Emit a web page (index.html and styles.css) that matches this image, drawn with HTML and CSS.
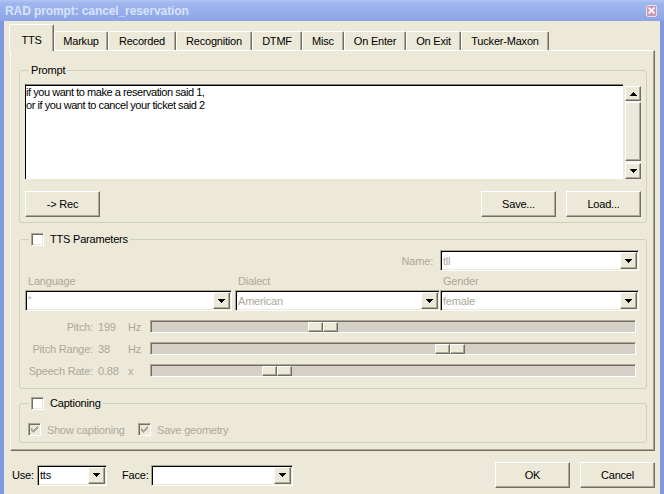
FILE: index.html
```html
<!DOCTYPE html>
<html lang="en">
<head>
<meta charset="utf-8">
<title>RAD prompt: cancel_reservation</title>
<link rel="stylesheet" href="styles.css">
</head>
<body>
<div class="window">
  <div class="titlebar">
    <span class="title">RAD prompt: cancel_reservation</span>
    <span class="close-btn"><svg width="7" height="7" viewBox="0 0 7 7"><path d="M0.6 0.6L6.4 6.4M6.4 0.6L0.6 6.4" stroke="#fff" stroke-width="1.7"/></svg></span>
  </div>
  <div class="client">
    <div class="tabs">
      <div class="tab selected w-tts">TTS</div>
      <div class="tab w-markup">Markup</div>
      <div class="tab w-recorded">Recorded</div>
      <div class="tab w-recognition">Recognition</div>
      <div class="tab w-dtmf">DTMF</div>
      <div class="tab w-misc">Misc</div>
      <div class="tab w-enter">On Enter</div>
      <div class="tab w-exit">On Exit</div>
      <div class="tab w-tucker">Tucker-Maxon</div>
    </div>
    <div class="panel">
      <fieldset class="group prompt-group">
        <legend>Prompt</legend>
        <div class="edit">
          <div class="edit-text">if you want to make a reservation said 1,<br>or if you want to cancel your ticket said 2</div>
          <div class="vscroll">
            <div class="raised sb-up"><svg width="7" height="4" viewBox="0 0 7 4"><path d="M3 0H4V1H5V2H6V3H7V4H0V3H1V2H2V1H3Z" fill="#000"/></svg></div>
            <div class="raised sb-thumb"></div>
            <div class="raised sb-down"><svg width="7" height="4" viewBox="0 0 7 4"><path d="M0 0H7V1H6V2H5V3H4V4H3V3H2V2H1V1H0Z" fill="#000"/></svg></div>
          </div>
        </div>
        <div class="btn-row">
          <button class="btn">-&gt; Rec</button>
          <span class="grow"></span>
          <button class="btn">Save...</button>
          <button class="btn">Load...</button>
        </div>
      </fieldset>

      <fieldset class="group tts-group">
        <legend class="check-legend"><span class="checkbox"></span><span>TTS Parameters</span></legend>
        <div class="param-grid">
          <div class="name-label disabled">Name:</div>
          <div class="combo name-combo"><span class="combo-text disabled">tll</span><span class="raised drop"><svg width="7" height="4" viewBox="0 0 7 4"><path d="M0 0H7V1H6V2H5V3H4V4H3V3H2V2H1V1H0Z" fill="#000"/></svg></span></div>
          <div class="field-label disabled">Language</div>
          <div class="field-label disabled">Dialect</div>
          <div class="field-label disabled">Gender</div>
          <div class="combo lang-combo"><span class="combo-text disabled small">*</span><span class="raised drop"><svg width="7" height="4" viewBox="0 0 7 4"><path d="M0 0H7V1H6V2H5V3H4V4H3V3H2V2H1V1H0Z" fill="#000"/></svg></span></div>
          <div class="combo dialect-combo"><span class="combo-text disabled">American</span><span class="raised drop"><svg width="7" height="4" viewBox="0 0 7 4"><path d="M0 0H7V1H6V2H5V3H4V4H3V3H2V2H1V1H0Z" fill="#000"/></svg></span></div>
          <div class="combo gender-combo"><span class="combo-text disabled">female</span><span class="raised drop"><svg width="7" height="4" viewBox="0 0 7 4"><path d="M0 0H7V1H6V2H5V3H4V4H3V3H2V2H1V1H0Z" fill="#000"/></svg></span></div>
        </div>
        <div class="sliders">
          <div class="slider-row">
            <span class="s-label disabled">Pitch:</span><span class="s-val disabled">199</span><span class="s-unit disabled">Hz</span>
            <div class="track"><div class="thumb" style="left:157px"><span class="raised half"></span><span class="raised half"></span></div></div>
          </div>
          <div class="slider-row">
            <span class="s-label disabled">Pitch Range:</span><span class="s-val disabled">38</span><span class="s-unit disabled">Hz</span>
            <div class="track"><div class="thumb" style="left:284px"><span class="raised half"></span><span class="raised half"></span></div></div>
          </div>
          <div class="slider-row">
            <span class="s-label disabled">Speech Rate:</span><span class="s-val disabled">0.88</span><span class="s-unit disabled">x</span>
            <div class="track"><div class="thumb" style="left:111px"><span class="raised half"></span><span class="raised half"></span></div></div>
          </div>
        </div>
      </fieldset>

      <fieldset class="group cap-group">
        <legend class="check-legend"><span class="checkbox"></span><span>Captioning</span></legend>
        <div class="cap-row">
          <div class="cap-item"><span class="checkbox checked-dis"><svg width="7" height="7" viewBox="0 0 7 7"><path d="M6 0H7V3H6V4H5V5H4V6H3V7H2V6H1V5H0V2H1V3H2V4H3V3H4V2H5V1H6Z" fill="#ACA899"/></svg></span><span class="disabled">Show captioning</span></div>
          <div class="cap-item"><span class="checkbox checked-dis"><svg width="7" height="7" viewBox="0 0 7 7"><path d="M6 0H7V3H6V4H5V5H4V6H3V7H2V6H1V5H0V2H1V3H2V4H3V3H4V2H5V1H6Z" fill="#ACA899"/></svg></span><span class="disabled">Save geometry</span></div>
        </div>
      </fieldset>
    </div>

    <div class="bottom">
      <span class="use-label">Use:</span>
      <div class="combo use-combo"><span class="combo-text">tts</span><span class="raised drop"><svg width="7" height="4" viewBox="0 0 7 4"><path d="M0 0H7V1H6V2H5V3H4V4H3V3H2V2H1V1H0Z" fill="#000"/></svg></span></div>
      <span class="face-label">Face:</span>
      <div class="combo face-combo"><span class="combo-text"></span><span class="raised drop"><svg width="7" height="4" viewBox="0 0 7 4"><path d="M0 0H7V1H6V2H5V3H4V4H3V3H2V2H1V1H0Z" fill="#000"/></svg></span></div>
      <span class="grow"></span>
      <button class="btn">OK</button>
      <button class="btn">Cancel</button>
    </div>
  </div>
</div>
</body>
</html>
```

FILE: styles.css
```css
* { box-sizing: border-box; }
html, body { margin: 0; padding: 0; }
body {
  width: 664px; height: 494px; overflow: hidden;
  background: #ECE9D8;
  font-family: "Liberation Sans", Arial, sans-serif;
  font-size: 11px; color: #000;
  letter-spacing: -0.2px;
}
.window { display: flex; flex-direction: column; width: 664px; height: 494px; }

.titlebar {
  flex: none; height: 21px;
  display: flex; align-items: center;
  padding: 0 7px 0 5px;
  background: linear-gradient(180deg, #B3C5F3 0, #A0B6EE 3px, #95ADEA 60%, #8CA4E7 100%);
}
.title { font-weight: bold; font-size: 12px; color: #D8E3F8; letter-spacing: -0.1px; }
.close-btn {
  margin-left: auto; width: 11px; height: 12px;
  display: flex; align-items: center; justify-content: center;
  background: #C69AB3; border: 1px solid #EBDDE6; border-radius: 2px;
}

.client {
  flex: 1; display: flex; flex-direction: column;
  border-left: 4px solid #8098E1; border-right: 4px solid #8098E1;
}

.tabs {
  flex: none; height: 29px;
  display: flex; align-items: flex-end;
  padding-left: 5px;
  position: relative; z-index: 1;
}
.tab {
  height: 19px;
  display: flex; align-items: center; justify-content: center;
  background: #ECE9D8;
  border-top: 1px solid #fff; border-left: 1px solid #fff; border-right: 1px solid #716F64;
  box-shadow: inset -1px 0 0 #ACA899;
  border-top-left-radius: 2px; border-top-right-radius: 2px;
  white-space: nowrap;
}
.tab.selected { height: 27px; margin-bottom: -1px; padding-top: 3px; }
.w-tts { width: 45px; }
.w-markup { width: 54px; }
.w-recorded { width: 68px; }
.w-recognition { width: 76px; }
.w-dtmf { width: 50px; }
.w-misc { width: 42px; }
.w-enter { width: 62px; }
.w-exit { width: 55px; }
.w-tucker { width: 88px; }

.panel {
  flex: none;
  margin: 0 5px 0 6px;
  padding: 13px 7px 7px 8px;
  border-top: 1px solid #fff; border-left: 1px solid #fff;
  border-right: 1px solid #716F64; border-bottom: 1px solid #716F64;
  box-shadow: inset -1px -1px 0 #ACA899;
}

.group {
  margin: 0; min-width: 0;
  border: 1px solid #D0D0BF; border-radius: 3px;
  padding: 7px 5px 5px 5px;
}
.group legend { margin-left: 4px; padding: 0 2px; height: 13px; line-height: 13px; }
.check-legend { display: flex; align-items: center; }
.check-legend .checkbox { margin-right: 6px; }

.prompt-group { padding: 7px 5px 5px 5px; }
.tts-group { margin-top: 10px; padding: 4px 5px 11px 5px; }
.cap-group { margin-top: 8px; padding: 13px 5px 6px 5px; }

.raised {
  background: #ECE9D8;
  border: 1px solid; border-color: #fff #716F64 #716F64 #fff;
  box-shadow: inset -1px -1px 0 #ACA899;
}

.edit { display: flex; height: 95px; }
.edit-text {
  flex: 1; background: #fff;
  border-top: 1px solid #808080; border-left: 1px solid #000;
  box-shadow: inset 0 1px 0 #000;
  padding-top: 1px;
  line-height: 13px; white-space: nowrap;
  letter-spacing: -0.45px;
}
.vscroll {
  width: 16px; margin-left: 2px; margin-top: 2px;
  display: flex; flex-direction: column;
  background: #F4F3EE;
}
.vscroll .raised { display: flex; align-items: center; justify-content: center; }
.sb-up { height: 15px; }
.sb-thumb { height: 59px; margin-top: 1px; }
.sb-down { height: 16px; margin-top: 2px; }

.btn-row { display: flex; margin-top: 12px; gap: 10px; }
.grow { flex: 1; }
.btn {
  width: 75px; height: 26px; padding: 0;
  font-family: inherit; font-size: 11px; color: #000; letter-spacing: -0.2px;
  background: #ECE9D8;
  border: 1px solid; border-color: #fff #716F64 #716F64 #fff;
  box-shadow: inset -1px -1px 0 #ACA899;
}

.disabled { color: #ACA899; }

.param-grid {
  display: grid;
  grid-template-columns: 210px 205px 199px;
  grid-template-rows: 21px 19px 21px;
}
.name-label { grid-column: 1 / 3; text-align: right; padding-right: 7px; align-self: center; }
.field-label { padding-left: 3px; align-self: end; padding-bottom: 2px; line-height: 13px; }

.combo {
  height: 21px;
  display: flex; align-items: center;
  background: #fff;
  border: 1px solid; border-color: #ACA899 #fff #fff #ACA899;
  box-shadow: inset 1px 1px 0 #000, inset -1px -1px 0 #ECE9D8;
}
.combo-text { flex: 1; padding-left: 2px; white-space: nowrap; overflow: hidden; }
.combo-text.small { font-size: 9px; align-self: flex-start; padding-top: 3px; }
.drop {
  width: 17px; height: 17px; margin-right: 1px;
  display: flex; align-items: center; justify-content: center;
}
.lang-combo { width: 207px; }

.sliders { margin-top: 9px; display: flex; flex-direction: column; gap: 9px; }
.slider-row {
  display: grid;
  grid-template-columns: 68px 35px 22px 1fr;
  align-items: center; height: 13px; margin-right: 5px;
}
.s-label { text-align: right; white-space: nowrap; }
.s-val { padding-left: 5px; }
.track {
  position: relative; height: 13px;
  background: #D4D0C8;
  border: 1px solid; border-color: #ACA899 #fff #fff #ACA899;
  box-shadow: inset 1px 1px 0 #716F64;
}
.thumb { position: absolute; top: 1px; width: 30px; height: 10px; display: flex; }
.thumb .half { flex: 1; }

.checkbox {
  width: 13px; height: 13px; flex: none;
  display: inline-flex; align-items: center; justify-content: center;
  background: #fff;
  border: 1px solid; border-color: #ACA899 #fff #fff #ACA899;
  box-shadow: inset 1px 1px 0 #716F64, inset -1px -1px 0 #ECE9D8;
}
.checkbox.checked-dis { background: #ECE9D8; }

.cap-row { display: grid; grid-template-columns: 110px auto; margin-left: 3px; height: 13px; }
.cap-item { display: flex; align-items: center; gap: 6px; white-space: nowrap; }

.bottom {
  flex: none; height: 26px; margin-top: 11px;
  display: flex; align-items: center;
  padding: 0 5px 0 8px; gap: 0;
}
.use-label { width: 25px; }
.use-combo { width: 70px; }
.face-label { width: 29px; margin-left: 15px; }
.face-combo { width: 142px; }
.bottom .btn + .btn { margin-left: 10px; }
```
